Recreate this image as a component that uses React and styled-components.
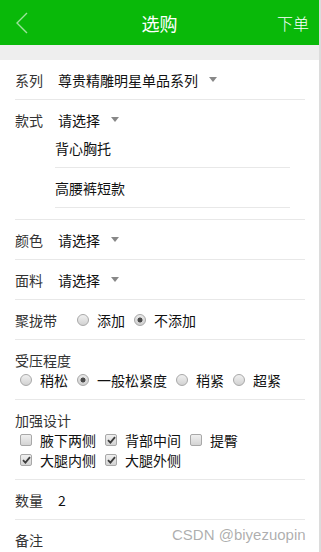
import React from "react";
import styled, { createGlobalStyle } from "styled-components";

const GlobalStyle = createGlobalStyle`
    html, body {
        margin: 0;
        padding: 0;
        background: #fff;
    }
    body {
        font-family: "Noto Sans CJK SC", "Noto Sans", sans-serif;
        color: #222;
    }
`;

const Page = styled.div`
    position: relative;
    width: 319px;
    min-height: 100vh;
    border-right: 2px solid #dcdcdc;
    background: #fff;
`;

const Header = styled.header`
    height: 45px;
    background: #09b909;
    display: grid;
    grid-template-columns: 1fr auto 1fr;
    align-items: center;
    color: #fff;
`;

const BackButton = styled.button`
    justify-self: start;
    display: flex;
    align-items: center;
    padding: 0 0 0 16px;
    border: 0;
    background: none;
    cursor: pointer;
`;

const Title = styled.h1`
    margin: 0;
    font-size: 18px;
    font-weight: normal;
    line-height: 20px;
`;

const Submit = styled.button`
    justify-self: end;
    padding: 0 10px 0 0;
    border: 0;
    background: none;
    color: #fff;
    font-family: inherit;
    font-size: 16px;
    font-weight: 300;
    line-height: 20px;
    cursor: pointer;
`;

const Band = styled.div`
    height: 15px;
    background: #eeeeee;
`;

const Form = styled.div`
    padding: 0 14px 0 15px;
    font-size: 14px;
    line-height: 20px;
`;

const Row = styled.div`
    display: flex;
    flex-direction: ${({ stacked }) => (stacked ? "column" : "row")};
    align-items: ${({ stacked }) => (stacked ? "stretch" : "center")};
    padding: 10px 0 9px;
    border-bottom: ${({ last }) => (last ? "0" : "1px solid #e8e8e8")};
`;

const Line = styled.div`
    display: flex;
    align-items: center;
`;

const Label = styled.span`
    margin-right: 15px;
    color: #333;
`;

const Select = styled.span`
    display: inline-flex;
    align-items: center;
    color: #111;
`;

const Caret = styled.i`
    width: 0;
    height: 0;
    margin: -1px 0 0 11px;
    border-left: 4.5px solid transparent;
    border-right: 4.5px solid transparent;
    border-top: 5px solid #888;
`;

const OptionList = styled.ul`
    list-style: none;
    margin: -2px 15px 2px 40px;
    padding: 0;
`;

const Option = styled.li`
    padding: 10px 0 9px;
    border-bottom: 1px solid #e8e8e8;
    color: #111;
`;

const Choices = styled.div`
    display: flex;
    flex-wrap: wrap;
    padding-left: 5px;
    column-gap: 9px;
`;

const Choice = styled.label`
    display: inline-flex;
    align-items: center;
    gap: 8px;
    color: #111;
    cursor: pointer;
`;

const RadioMark = styled.span`
    box-sizing: border-box;
    width: 12px;
    height: 12px;
    border-radius: 50%;
    border: 1px solid #a8a8a8;
    background: ${({ checked }) =>
        checked
            ? "radial-gradient(circle, #4a4a4a 0 2.2px, transparent 2.8px), linear-gradient(#e9e9e9, #cfcfcf)"
            : "linear-gradient(#f0f0f0, #d2d2d2)"};
`;

const BoxMark = styled.span`
    box-sizing: border-box;
    display: flex;
    align-items: center;
    justify-content: center;
    width: 12px;
    height: 12px;
    border-radius: 2px;
    border: 1px solid #a8a8a8;
    background: linear-gradient(#f0f0f0, #d4d4d4);
`;

const Watermark = styled.div`
    position: absolute;
    left: 172px;
    top: 525px;
    font-family: "Liberation Sans", Arial, sans-serif;
    font-size: 15px;
    line-height: 20px;
    color: rgba(120, 120, 120, 0.6);
    pointer-events: none;
`;

const Radio = ({ checked, children }) => (
    <Choice>
        <RadioMark checked={checked} />
        {children}
    </Choice>
);

const Check = ({ checked, children }) => (
    <Choice>
        <BoxMark>
            {checked && (
                <svg width="9" height="8" viewBox="0 0 9 8">
                    <path d="M1 4.2 L3.4 6.6 L8 1.2" fill="none" stroke="#3c3c3c" strokeWidth="1.8" />
                </svg>
            )}
        </BoxMark>
        {children}
    </Choice>
);

const pickers = [
    { label: "颜色", value: "请选择" },
    { label: "面料", value: "请选择" }
];

const pressures = [
    { text: "稍松", checked: false },
    { text: "一般松紧度", checked: true },
    { text: "稍紧", checked: false },
    { text: "超紧", checked: false }
];

const designs = [
    { text: "腋下两侧", checked: false },
    { text: "背部中间", checked: true },
    { text: "提臀", checked: false },
    { text: "大腿内侧", checked: true },
    { text: "大腿外侧", checked: true }
];

export default function App() {
    return (
        <Page>
            <GlobalStyle />
            <Header>
                <BackButton aria-label="返回">
                    <svg width="12" height="22" viewBox="0 0 12 22">
                        <path d="M11 1 L1 11 L11 21" fill="none" stroke="rgba(255,255,255,0.6)" strokeWidth="1.4" />
                    </svg>
                </BackButton>
                <Title>选购</Title>
                <Submit>下单</Submit>
            </Header>
            <Band />
            <Form>
                <Row>
                    <Label>系列</Label>
                    <Select>尊贵精雕明星单品系列<Caret /></Select>
                </Row>
                <Row stacked>
                    <Line>
                        <Label>款式</Label>
                        <Select>请选择<Caret /></Select>
                    </Line>
                    <OptionList>
                        <Option>背心胸托</Option>
                        <Option>高腰裤短款</Option>
                    </OptionList>
                </Row>
                {pickers.map(p => (
                    <Row key={p.label}>
                        <Label>{p.label}</Label>
                        <Select>{p.value}<Caret /></Select>
                    </Row>
                ))}
                <Row>
                    <Label>聚拢带</Label>
                    <Choices>
                        <Radio>添加</Radio>
                        <Radio checked>不添加</Radio>
                    </Choices>
                </Row>
                <Row stacked>
                    <Label>受压程度</Label>
                    <Choices>
                        {pressures.map(p => (
                            <Radio key={p.text} checked={p.checked}>{p.text}</Radio>
                        ))}
                    </Choices>
                </Row>
                <Row stacked>
                    <Label>加强设计</Label>
                    <Choices>
                        {designs.map(d => (
                            <Check key={d.text} checked={d.checked}>{d.text}</Check>
                        ))}
                    </Choices>
                </Row>
                <Row>
                    <Label>数量</Label>
                    <Select>2</Select>
                </Row>
                <Row last>
                    <Label>备注</Label>
                </Row>
            </Form>
            <Watermark>CSDN @biyezuopin</Watermark>
        </Page>
    );
}
